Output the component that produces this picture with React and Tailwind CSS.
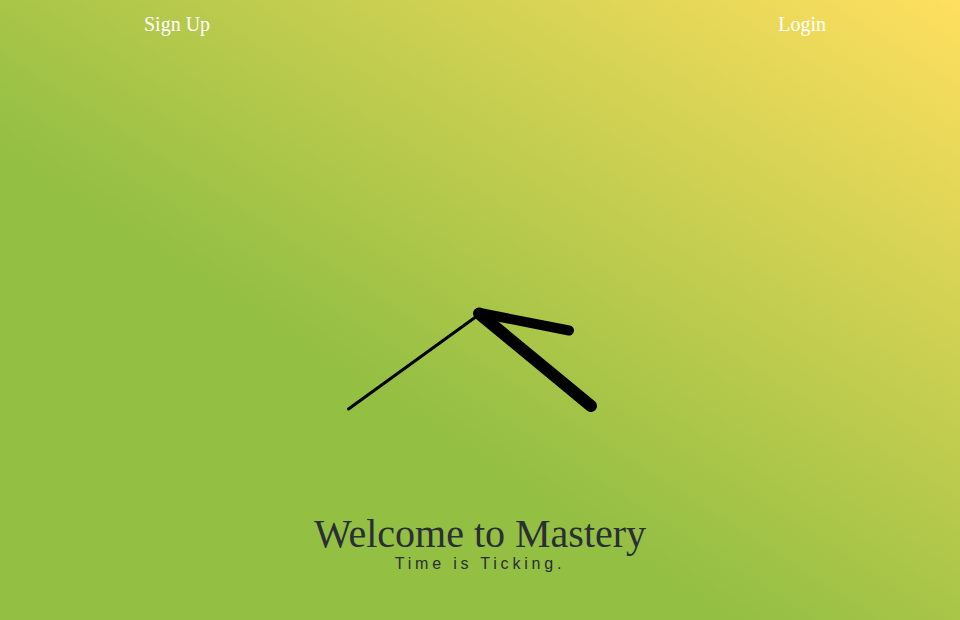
export default function App() {
  return (
    <div className="h-screen w-full overflow-hidden bg-[linear-gradient(to_top_right,#93bf43_38%,#ffdf5f)] font-['Liberation_Serif',serif]">
      {/* Top nav */}
      <nav className="flex justify-between pt-[13px] pl-[144px] pr-[134px] text-[20px] leading-[22px] text-white">
        <a href="#">Sign Up</a>
        <a href="#">Login</a>
      </nav>

      {/* Clock hands */}
      <svg
        className="mx-auto mt-[255px] block"
        width="300"
        height="140"
        viewBox="330 290 300 140"
        fill="none"
        stroke="#000"
        strokeLinecap="round"
      >
        <line x1="477" y1="316" x2="348.5" y2="409" strokeWidth="3" />
        <line x1="479" y1="313.5" x2="591" y2="406" strokeWidth="12" />
        <line x1="480" y1="313" x2="569" y2="330.5" strokeWidth="10" />
      </svg>

      {/* Heading */}
      <div className="mt-[84px] text-center text-[#2a2e36]">
        <h1 className="text-[40px] leading-none">Welcome to Mastery</h1>
        <p className="font-['Liberation_Sans',sans-serif] text-[16px] leading-[19px] tracking-[3.8px]">
          Time is Ticking.
        </p>
      </div>
    </div>
  );
}
